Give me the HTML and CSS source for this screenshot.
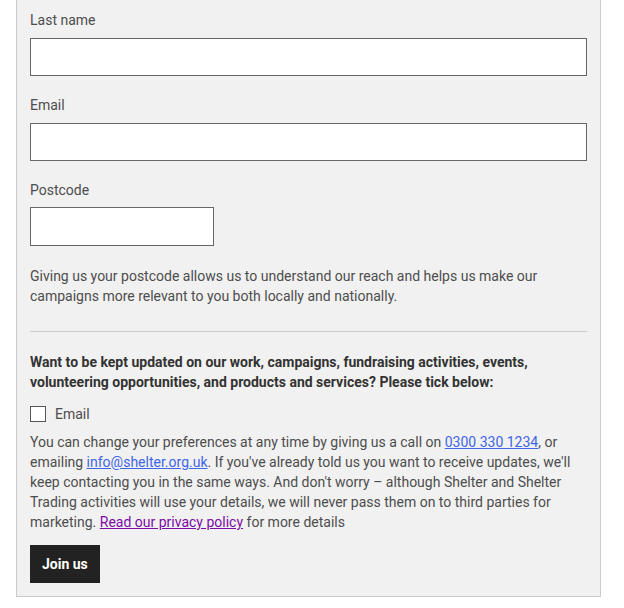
FILE: index.html
```html
<!DOCTYPE html>
<html lang="en">
<head>
<meta charset="utf-8">
<link rel="stylesheet" href="styles.css">
</head>
<body>
<div class="page">
  <form class="card">
    <div class="field">
      <label class="label" for="last">Last name</label>
      <input class="input" id="last" type="text">
    </div>
    <div class="field">
      <label class="label" for="email">Email</label>
      <input class="input" id="email" type="email">
    </div>
    <div class="field field-short">
      <label class="label" for="pc">Postcode</label>
      <input class="input input-short" id="pc" type="text">
    </div>
    <p class="help">Giving us your postcode allows us to understand our reach and helps us make our campaigns more relevant to you both locally and nationally.</p>
    <hr class="divider">
    <p class="question">Want to be kept updated on our work, campaigns, fundraising activities, events, volunteering opportunities, and products and services? Please tick below:</p>
    <label class="check">
      <span class="box"></span>
      <span>Email</span>
    </label>
    <p class="small">You can change your preferences at any time by giving us a call on <a class="link" href="#">0300 330 1234</a>, or emailing <a class="link" href="#">info@shelter.org.uk</a>. If you've already told us you want to receive updates, we'll keep contacting you in the same ways. And don't worry – although Shelter and Shelter Trading activities will use your details, we will never pass them on to third parties for marketing. <a class="link visited" href="#">Read our privacy policy</a> for more details</p>
    <button class="btn" type="button">Join us</button>
  </form>
</div>
</body>
</html>
```
FILE: styles.css
```css
* { box-sizing: border-box; }
html, body { margin: 0; padding: 0; background: #fff; }
body {
  font-family: Roboto, "Liberation Sans", sans-serif;
  font-size: 14px;
  line-height: 20px;
  color: #4d4d4d;
}
.page { padding: 0 23px 0 16px; }
.card {
  background: #f1f1f1;
  border: 1px solid #cccccc;
  border-top: none;
  padding: 10px 13px 13px 13px;
  display: flex;
  flex-direction: column;
  align-items: flex-start;
}
.field {
  display: flex;
  flex-direction: column;
  width: 100%;
  margin-bottom: 19px;
}
.field-short { margin-bottom: 20px; }
.field-short .label { margin-bottom: 7px; }
.label {
  color: #4d4d4d;
  margin-bottom: 8px;
}
.input {
  height: 38px;
  width: 100%;
  border: 1px solid #666;
  background: #fff;
  border-radius: 0;
  font: inherit;
  padding: 0 8px;
}
.input-short { width: 184px; height: 39px; }
.help { margin: 0; }
.divider {
  width: 100%;
  border: none;
  border-top: 1px solid #cccccc;
  margin: 25px 0 20px;
}
.question {
  margin: 0;
  font-weight: 700;
  color: #333;
}
.check {
  display: flex;
  align-items: center;
  gap: 9px;
  margin: 12px 0 8px;
  color: #4d4d4d;
}
.box {
  width: 16px;
  height: 16px;
  border: 1px solid #555;
  background: #fff;
}
.small { margin: 0 0 13px; }
.link { color: #3f66e8; text-decoration: underline; }
.link.visited { color: #7d0ba8; }
.btn {
  background: #222;
  color: #fff;
  border: none;
  font: inherit;
  font-weight: 700;
  height: 38px;
  padding: 0 12px;
  cursor: pointer;
}
```
